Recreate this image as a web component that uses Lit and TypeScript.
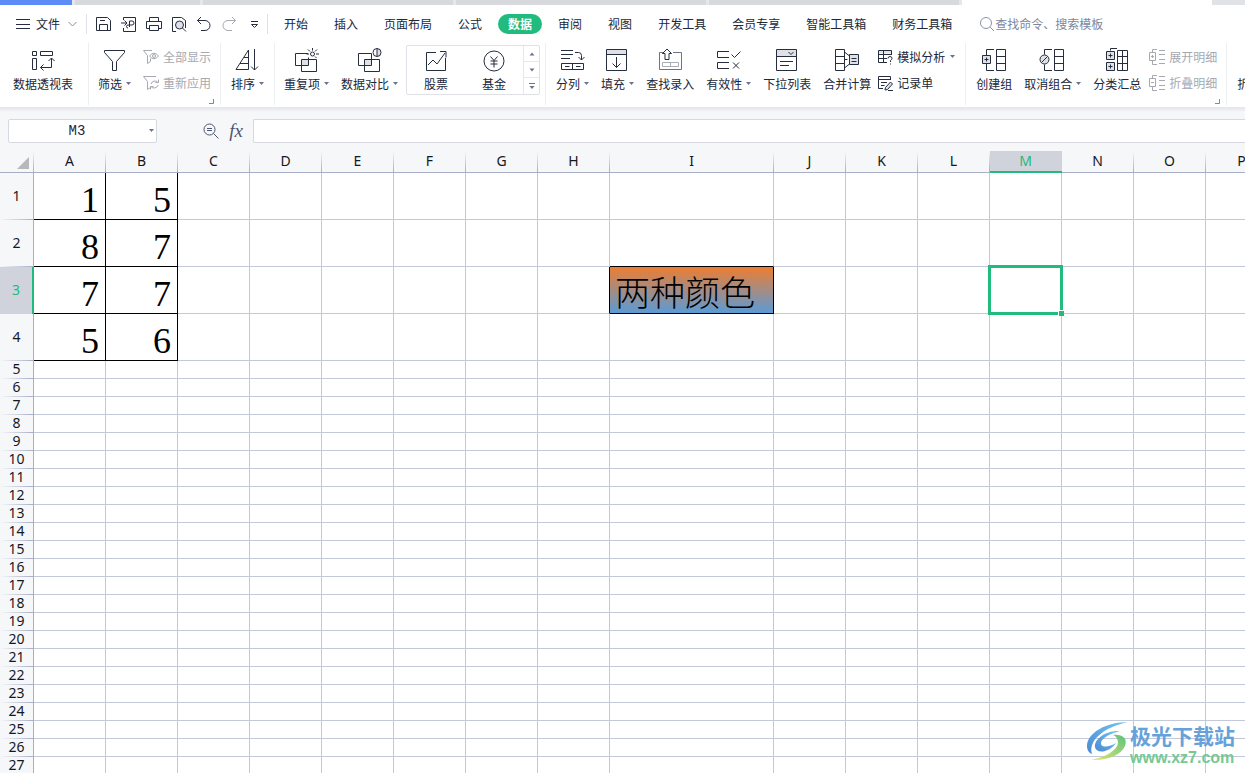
import { LitElement, html, svg, css, nothing, TemplateResult } from "lit";
import { customElement } from "lit/decorators.js";
import { classMap } from "lit/directives/class-map.js";

type Art = ReturnType<typeof svg>;

const big = (art: Art) => html`<svg class="big" viewBox="0 0 24 24" aria-hidden="true">${art}</svg>`;
const small = (art: Art) => html`<svg class="small" viewBox="0 0 16 16" aria-hidden="true">${art}</svg>`;

/* ---------- 24px ribbon icons ---------- */
const pivot = svg`<path d="M1.5 3.5h4v4h-4zM9.5 3.5h12v4h-12zM1.5 10.5h4v11h-4zM20.5 10v9.5H9.5M17.5 13l3-3 3 3M12.5 16.5l-3 3 3 3"/>`;
const filter = svg`<path d="M2.5 2.5h20v2l-8 9v9h-4v-9l-8-9z"/>`;
const sort = svg`<path d="M13.5 2v19.5H1L13.5 2M9 9.5h4.500M5 15.500h8.500M19.500 1v21M16 18.500l3.500 3.500 3.500-3.500"/>`;
const duplicate = svg`<path class="tint" d="M7.500 11.500h7v6h-7z"/><path d="M14 5.500H1.500v12h13V9.500M15 11.500h7.500v12h-15v-12h7"/><circle cx="18.500" cy="6" r="2"/><path d="M18.500 0v2.500M14 1.500l2 2M23 1.500l-2 2M12.500 6H15M22 6h3M21 8.500l1.500 1.500"/>`;
const compare = svg`<path class="tint" d="M7.500 11.500h7v6h-7z"/><path d="M14.500 5.500h-13v12h13v-12M14.500 11.500h8v12h-15v-12z"/><path class="tint" d="M20 .5a4 4 0 010 8z"/><circle cx="20" cy="4.500" r="4"/><path d="M20 .5v8"/>`;
const stock = svg`<path d="M12 4.500H2.500v18h19V10M4 17l5-5 4 4 8-11M16 3.500h6v6"/>`;
const fund = svg`<circle cx="12" cy="13" r="10"/><path d="M8.500 8.500l3.500 4 3.500-4M8.500 13h7M8.500 16h7M12 12.500v7"/>`;
const splitCols = svg`<path d="M1 2.500h12M1 6.500h12M1 10.500h9M15 4.500h3.500q3 0 3 3V12M18.500 9l3 3 3-3M1.500 15.500h22v6h-22zM12.500 15.500v6M5 18.500h4.500M16 18.500h4.500"/>`;
const fill = svg`<path class="tint" d="M1.500 1.500h20v5h-20z"/><path d="M1.500 1.500h20v21h-20zM1.500 6.500h20M11.500 9v10.500M7.500 15.500l4 4 4-4"/>`;
const lookup = svg`<path class="mid" d="M5 4.500H1.500v17h22v-17H15"/><path d="M9 1L4.500 5.500H7v6h4v-6h2.500z"/><path class="dim" d="M4.500 14.500h16v4h-16zM12.500 14.500v4"/>`;
const validity = svg`<path d="M13 3.500H1.500v6H13M13 14.500H1.500v6H13M15.500 6.500l3 3 6-6M17 14.500l6 6M23 14.500l-6 6"/>`;
const dropdown = svg`<path class="tint" d="M1.500 1.500h20v7h-20z"/><path d="M1.500 1.500h20v21h-20zM1.500 8.500h20M13.500 4l2.500 2.500L18.500 4M5 13.500h13M5 17.500h9"/>`;
const consolidate = svg`<path class="tint" d="M14.500 6.500h9v10h-9z"/><path d="M.5 1.500h9v21h-9zM.5 8.500h9M.5 15.500h9M9.500 4l5 4M9.500 20l5-4M14.500 6.500h9v10h-9zM9.500 11.500h3M16.500 10.500h5M16.500 13.500h5"/>`;
const group = svg`<path d="M14.500 1.500h9v21h-9zM14.500 8.500h9M14.500 15.500h9M12 1.500H4.500v6M12 22.500H4.500v-7"/><path class="tint edge" d="M.5 7.500h8v8h-8z"/><path d="M2.500 11.500h4M4.500 9.500v4"/>`;
const ungroup = svg`<path d="M14.500 1.500h9v21h-9zM14.500 8.500h9M14.500 15.500h9M12 1.500H4.500v5M12 22.500H4.500v-6"/><circle class="tint edge" cx="4.500" cy="11.500" r="4.500"/><path d="M1.500 14.500l6-6"/>`;
const subtotal = svg`<path d="M12.500 2.500h10v20h-10zM17.500 2.500v20M12.500 8.500h10M12.500 15.500h10M12 .5H5.500v2"/><path class="tint edge" d="M1.500 3.500h8v8h-8zM1.500 14.500h8v8h-8z"/><path d="M3.500 7.500h4M5.500 5.500v4M3.500 18.500h4M5.500 16.500v4"/>`;
const fold = svg`<path d="M12.500 1.500h9v21h-9zM12.500 8.500h9M12.500 15.500h9"/>`;

/* ---------- 16px icons ---------- */
const showAll = svg`<path d="M9 1.500H.5l4 5v8l3-2v-3"/><path d="M6.500 7q4.500-5.500 9 0q-4.500 5.500-9 0z"/><circle cx="11" cy="7" r="1.500"/>`;
const reapply = svg`<path d="M13 1.500H.5l4 5v8l3-2"/><path d="M8 9a4 4 0 017-1.500M15 10a4 4 0 01-7 1.500M15.500 4.500v3h-3M7.500 14.500v-3h3"/>`;
const whatIf = svg`<path class="tint" d="M1.500 1.500h13v3h-13z"/><path d="M14.500 6V1.500h-13v12H10M1.500 5.500h13M1.500 9.500H10M6.500 1.500v12M11 9.500q0-2 2-2t2 2q0 1-1.500 2v1.500M13.500 14.500v1"/>`;
const recordForm = svg`<path d="M13.500 5V1.500h-12v12H6M1.500 4.500h12M4 7.500h6M4 10.500h3.500"/><path class="tint edge" d="M8.500 12.500l5-5.500 2 2-5 5.500-2.500.5z"/><path d="M11 15.500h5"/>`;
const expand = svg`<path d="M8 .5H3.500v3M3.500 11.500v4H8M10 1.500h6M10 5.500h6M10 10.500h6M10 14.500h6M.5 3.500h6v8h-6zM2 7.500h3M3.500 6v3"/>`;
const collapse = svg`<path d="M8 .5H3.500v3M3.500 11.500v4H8M10 1.500h6M10 5.500h6M10 10.500h6M10 14.500h6M.5 3.500h6v8h-6zM2 7.500h3"/>`;
const save = svg`<path d="M.5 1.500h11l3 3v10H.5zM3.500 14.500v-6h8v6M4 4.500h5"/>`;
const exportTo = svg`<path d="M2.500 4V1.500h12v14h-12V12M0 7h6M3.500 4.500L6 7 3.500 9.500M8.500 11V5H11a2 2 0 010 4H7a1.500 1.500 0 100 3"/>`;
const print = svg`<path d="M3.500 5V1.500h9V5M3.500 12.500h-3v-7h15v7h-3M3.500 9.500h9v5h-9z"/>`;
const preview = svg`<path d="M5 15.500H1.500v-14h9l4 3V12"/><circle class="tint edge" cx="8.500" cy="9" r="4"/><path d="M11.500 12l3.500 3.500"/>`;
const undo = svg`<path d="M5 1L1.500 4.500 5 8M1.500 4.500H9a5 5 0 010 10H5"/>`;
const redo = svg`<path d="M11 1l3.500 3.500L11 8M14.500 4.500H7a5 5 0 000 10h4"/>`;
const more = svg`<path d="M5 5.500h7M5.500 8.500l3 3 3-3z"/>`;
const menuBars = svg`<path d="M0 3.500h14M0 8.500h14M0 12.500h14"/>`;
const magnifier = svg`<circle cx="7" cy="7" r="5.500"/><path d="M11 11l4 4"/>`;
const findValue = svg`<circle cx="6.500" cy="6.500" r="5.500"/><path d="M10.500 10.500l5 5M4 5.500h5M4 7.500h5"/>`;

const caret = html`<svg class="caret" viewBox="0 0 8 6" aria-hidden="true"><path d="M4 1h5L6.500 4z"/></svg>`;

interface Command { label: string; icon: Art; menu?: boolean; off?: boolean }
const ribbon: Record<string, Command[]> = {
  main: [
    { label: "分列", icon: splitCols, menu: true },
    { label: "填充", icon: fill, menu: true },
    { label: "查找录入", icon: lookup },
    { label: "有效性", icon: validity, menu: true },
    { label: "下拉列表", icon: dropdown },
    { label: "合并计算", icon: consolidate },
  ],
  outline: [
    { label: "创建组", icon: group },
    { label: "取消组合", icon: ungroup, menu: true },
    { label: "分类汇总", icon: subtotal },
  ],
};

const tabs = ["开始", "插入", "页面布局", "公式", "数据", "审阅", "视图", "开发工具", "会员专享", "智能工具箱", "财务工具箱"];
const quick: [string, Art, boolean?][] = [
  ["保存", save], ["输出", exportTo], ["打印", print], ["打印预览", preview], ["撤销", undo], ["恢复", redo, true], ["更多", more],
];

const columns = "ABCDEFGHIJKLMNOPQRST".split("");
const rowCount = 40;
const values: Record<string, string> = {
  A1: "1", B1: "5", A2: "8", B2: "7", A3: "7", B3: "7", A4: "5", B4: "6", I3: "两种颜色",
};
const boxed = new Set(["A1", "B1", "A2", "B2", "A3", "B3", "A4", "B4", "I3"]);

@customElement("sheet-grid")
class SheetGrid extends LitElement {
  static styles = css`
    :host { display: block; overflow: hidden; background: #fff; }
    table { table-layout: fixed; border-collapse: separate; border-spacing: 0; width: max-content; }
    .gutter { width: 34px; }
    .col { width: 72px; }
    .col.wide { width: 164px; }
    th, td { box-sizing: border-box; padding: 0; border: 0 solid #c4c9da; border-width: 0 1px 1px 0; overflow: hidden; white-space: nowrap; }
    th { font: 14px/16px "Noto Sans", "Open Sans", sans-serif; color: #16181f; background: #f5f7f9; text-align: center; vertical-align: middle; padding: 0 1px 2px 0; }
    thead th { height: 22px; border-right: 0;  border-bottom-color: #a8aec6;
      background: linear-gradient(#f5f7f9, #a8aec6) right / 1px 100% no-repeat #f5f7f9; }
    thead th.on { background: #d0d3db; color: #20bb7d; border-bottom: 2px solid #20bb7d; padding-bottom: 1px; }
    tbody th { border-right-color: #a8aec6; border-bottom: 0; padding-right: 0;
      background: linear-gradient(90deg, #f5f7f9, #a8aec6) bottom / 100% 1px no-repeat #f5f7f9; }
    tbody th.on { background: #d0d3db; color: #20bb7d; border-right: 2px solid #20bb7d; }
    .corner { text-align: right; }
    .corner svg { display: block; width: 12px; height: 12px; margin: 5px 4px 0 auto; fill: #b7b8bb; }
    .tall { height: 47px; }
    .short { height: 18px; }
    td { font: 36px/37px "Liberation Serif", "Noto Sans CJK SC", serif; color: #000; text-align: right; }
    .tall td { padding: 9px 6px 0 5px; }
    td.right { border-right-color: #000; }
    td.bottom { border-bottom-color: #000; }
    td.blend { background: linear-gradient(#ed7d31, #5b9bd5); text-align: left; font-size: 35px; line-height: 35px; font-weight: 300; }
    td.active { position: relative; overflow: visible; }
    .ring { position: absolute; inset: -2px; border: 3px solid #20bb7d; }
    .handle { position: absolute; right: -3px; bottom: -3px; width: 5px; height: 5px; background: #20bb7d; border: solid #fff; border-width: 1px 0 0 1px; }
  `;

  cell(c: number, r: number) {
    const key = columns[c] + r;
    const next = columns[c + 1] + r;
    const below = columns[c] + (r + 1);
    const active = key === "M3";
    return html`<td class=${classMap({
      right: boxed.has(key) || boxed.has(next),
      bottom: boxed.has(key) || boxed.has(below),
      blend: key === "I3",
      active,
    })}>${values[key] ?? nothing}${active ? html`<span class="ring"></span><span class="handle"></span>` : nothing}</td>`;
  }

  render() {
    return html`<table>
      <colgroup>
        <col class="gutter">
        ${columns.map((c) => html`<col class=${c === "I" ? "col wide" : "col"}>`)}
      </colgroup>
      <thead><tr>
        <th class="corner"><svg viewBox="0 0 12 12" aria-hidden="true"><path d="M12 0v12H0z"/></svg></th>
        ${columns.map((c) => html`<th scope="col" class=${c === "M" ? "on" : ""}>${c}</th>`)}
      </tr></thead>
      <tbody>
        ${Array.from({ length: rowCount }, (_, i) => i + 1).map((r) => html`<tr class=${r < 5 ? "tall" : "short"}>
          <th scope="row" class=${r === 3 ? "on" : ""}>${r}</th>
          ${columns.map((_, c) => this.cell(c, r))}
        </tr>`)}
      </tbody>
    </table>`;
  }
}

@customElement("app-root")
class AppRoot extends LitElement {
  static styles = css`
    :host { display: flex; flex-direction: column; position: relative; height: 100vh; overflow: hidden; background: #fff;
      color: #20273a; font: 12px/16px "Noto Sans CJK SC", sans-serif; }
    button { font: inherit; color: inherit; background: none; border: 0; padding: 0; margin: 0; white-space: nowrap; }
    input { font: inherit; color: inherit; box-sizing: border-box; outline: none; min-width: 0; }
    svg { display: block; fill: none; stroke: #262d3f; overflow: visible; flex: none; }
    .big { width: 24px; height: 24px; }
    .small { width: 16px; height: 16px; }
    .tint { fill: #dfe1e7; stroke: none; }
    .tint.edge { stroke: #262d3f; }
    .mid { stroke: #6f7481; }
    .dim { stroke: #a9adb6; }
    .caret { width: 8px; height: 6px; fill: #6a7390; stroke: none; }
    .off { color: #a6a9b0; }
    .off svg { stroke: #a6a9b0; }

    .windows { display: flex; flex: none; height: 5px; gap: 3px; background: #e6e7eb; }
    .windows span { flex: 0 0 250px; background: #d7d9dd; }
    .windows .current { flex-basis: 72px; background: #5e8cf7; }
    .windows .next { flex-basis: 125px; }
    .windows .blank { flex: 1 1 0; background: #fff; }
    .windows .tail { flex-basis: 33px; margin-left: -3px; background: #e1e2e7; }

    .bar { display: flex; flex: none; align-items: center; height: 38px; }
    .file { display: flex; align-items: center; gap: 6px; padding: 0 9px 0 16px; }
    .file .bars { width: 14px; height: 16px; }
    .file .down { width: 9px; height: 6px; margin-left: 2px; stroke: #8a8d94; }
    .rule { flex: none; width: 1px; height: 20px; background: #dfe1e6; }
    .quick { display: flex; gap: 9px; padding: 0 5px 0 9px; }
    .tabs { display: flex; gap: 6px; padding-left: 6px; }
    .tabs button { padding: 2px 10px; border-radius: 10px; }
    .tabs .on { background: #20bb7d; color: #fff; font-weight: 700; }
    .search { display: flex; align-items: center; flex: 1; padding-left: 17px; min-width: 0; }
    .search svg { stroke: #8a93ab; }
    .search input { flex: 1; border: 0; padding: 0; background: none; }
    .search input::placeholder { color: #7c869f; opacity: 1; }

    .ribbon { display: flex; flex: none; height: 64px; overflow: hidden; }
    .set { position: relative; display: flex; flex: none; gap: 12px; padding: 0 9px 0 10px; margin-bottom: 2px; border-right: 1px solid #eceef1; }
    .set.first { padding: 0 15px 0 13px; }
    .set.filter { padding-left: 9px; }
    .set.sort { padding-right: 10px; }
    .set.main { padding-right: 11px; }
    .set.last { border: 0; }
    .set.compact { padding: 0 5px 0 9px; }
    .cmd { display: flex; flex-direction: column; align-items: center; justify-content: flex-start; gap: 4px; padding-top: 5px; }
    .cmd.menu { margin-right: 1px; }
    .line { display: flex; align-items: center; }
    .stack { display: flex; flex-direction: column; gap: 6px; padding-top: 4px; }
    .main .stack { margin-left: -6px; }
    .outline .stack { margin-left: -4px; }
    .stack button { display: flex; align-items: center; height: 20px; gap: 4px; }
    .stack .caret { margin-left: -3px; }
    .launch { position: absolute; right: 6px; bottom: 1px; }
    .launch svg { width: 5px; height: 5px; stroke: #7f88a3; }
    .gallery { display: flex; height: 48px; margin: 2px 0 0 -4px; border: 1px solid #dfe1e6; border-radius: 2px; }
    .gallery .cmd { width: 58px; padding-top: 2px; }
    .spin { display: grid; grid-template-rows: 1fr 1fr 1fr; width: 15px; border-left: 1px solid #e6e8ec; }
    .spin button { display: flex; align-items: center; justify-content: center; border-bottom: 1px solid #e6e8ec; }
    .spin button:last-child { border-bottom: 0; }
    .spin svg { width: 6px; height: 6px; fill: #6a7390; stroke: none; }

    .formula { display: flex; flex: none; align-items: center; height: 44px; padding: 2px 0 0 8px; box-sizing: border-box;
      background: linear-gradient(#e4e6e9, #f5f7f9 4px); border-top: 1px solid #e6e7e9; }
    .name { display: flex; align-items: center; width: 149px; height: 24px; box-sizing: border-box; border: 1px solid #d6d9df; border-radius: 2px; background: #fff; }
    .name input { width: 136px; border: 0; padding: 0; background: none; text-align: center; font: 14px/16px "Liberation Mono", monospace; }
    .tools { display: flex; align-items: center; gap: 9px; padding: 0 9px 0 46px; }
    .tools svg { stroke: #4d5670; }
    .fx { width: 16px; font: italic 19px/20px "Liberation Serif", serif; color: #4d5670; }
    .entry { flex: 1; height: 24px; border: 1px solid #d6d9df; border-right: 0; border-radius: 2px 0 0 2px; background: #fff; padding: 0 6px; }

    sheet-grid { flex: 1; min-height: 0; }

    .brand { position: absolute; right: 10px; bottom: 6px; display: flex; align-items: flex-start; gap: 2px; text-decoration: none; opacity: .92; }
    .brand .mark { width: 42px; height: 42px; stroke: none; }
    .site { display: block; font: 700 21px/28px "Noto Sans CJK SC", sans-serif; color: #5a9bd6; }
    .url { display: block; font: 700 16px/18px "Liberation Sans", sans-serif; color: #6cc58b; }
  `;

  cmd(c: Command): TemplateResult {
    return html`<button class=${classMap({ cmd: true, menu: !!c.menu })}>${big(c.icon)}<span class="line">${c.label}${c.menu ? caret : nothing}</span></button>`;
  }

  row(label: string, art: Art, off = false, menu = false) {
    return html`<button class=${off ? "off" : ""}>${small(art)}${label}${menu ? caret : nothing}</button>`;
  }

  launcher() {
    return html`<button class="launch" aria-label="更多设置"><svg viewBox="0 0 5 5"><path d="M4.500 0v4.500H0"/></svg></button>`;
  }

  render() {
    return html`
      <div class="windows"><span class="current"></span><span class="next"></span><span></span><span></span><span></span><span class="blank"></span><span class="tail"></span></div>

      <nav class="bar">
        <button class="file"><svg class="bars" viewBox="0 0 14 16">${menuBars}</svg>文件<svg class="down" viewBox="0 0 9 6"><path d="M.5 1l4 4 4-4"/></svg></button>
        <span class="rule"></span>
        <div class="quick">${quick.map(([name, art, off]) => html`<button class=${off ? "off" : ""} aria-label=${name}>${small(art)}</button>`)}</div>
        <span class="rule"></span>
        <div class="tabs">${tabs.map((t) => html`<button class=${t === "数据" ? "on" : ""}>${t}</button>`)}</div>
        <label class="search">${small(magnifier)}<input type="text" aria-label="查找命令、搜索模板" placeholder="查找命令、搜索模板"></label>
      </nav>

      <div class="ribbon">
        <div class="set first">${this.cmd({ label: "数据透视表", icon: pivot })}</div>
        <div class="set filter">
          ${this.cmd({ label: "筛选", icon: filter, menu: true })}
          <div class="stack">${this.row("全部显示", showAll, true)}${this.row("重新应用", reapply, true)}</div>
          ${this.launcher()}
        </div>
        <div class="set sort">${this.cmd({ label: "排序", icon: sort, menu: true })}</div>
        <div class="set compact">
          ${this.cmd({ label: "重复项", icon: duplicate, menu: true })}
          ${this.cmd({ label: "数据对比", icon: compare, menu: true })}
          <div class="gallery">
            ${this.cmd({ label: "股票", icon: stock })}
            ${this.cmd({ label: "基金", icon: fund })}
            <div class="spin">
              <button aria-label="上一行"><svg viewBox="0 0 6 6"><path d="M.5 4.500h5L3 1.500z"/></svg></button>
              <button aria-label="下一行"><svg viewBox="0 0 6 6"><path d="M.5 1.500h5L3 4.500z"/></svg></button>
              <button aria-label="展开"><svg viewBox="0 0 6 6"><path d="M0 0h6v1H0zM.5 3h5L3 6z"/></svg></button>
            </div>
          </div>
        </div>
        <div class="set main">
          ${ribbon.main.map((c) => this.cmd(c))}
          <div class="stack">${this.row("模拟分析", whatIf, false, true)}${this.row("记录单", recordForm)}</div>
        </div>
        <div class="set outline">
          ${ribbon.outline.map((c) => this.cmd(c))}
          <div class="stack">${this.row("展开明细", expand, true)}${this.row("折叠明细", collapse, true)}</div>
          ${this.launcher()}
        </div>
        <div class="set last">${this.cmd({ label: "折叠窗格", icon: fold })}</div>
      </div>

      <div class="formula">
        <div class="name"><input type="text" aria-label="名称框" .value=${"M3"}>${caret}</div>
        <div class="tools"><button aria-label="查找">${small(findValue)}</button><button class="fx">fx</button></div>
        <input class="entry" type="text" aria-label="编辑栏">
      </div>

      <sheet-grid></sheet-grid>

      <a class="brand" href="#">
        <svg class="mark" viewBox="0 0 42 42" aria-hidden="true">
          <defs>
            <linearGradient id="blue" x1="0" y1="1" x2="1" y2="0"><stop offset="0" stop-color="#3f7fd0"/><stop offset="1" stop-color="#63c4ee"/></linearGradient>
            <linearGradient id="lime" x1="0" y1="1" x2="1" y2="0"><stop offset="0" stop-color="#e6e36a"/><stop offset="1" stop-color="#4fbf6f"/></linearGradient>
          </defs>
          <path fill="url(#blue)" d="M42 1C20 1 1 12 1 25c0 4 2 7 5 8C2 22 14 7 42 1z"/>
          <path fill="url(#blue)" d="M34 10C20 9 8 18 9 26c1 7 14 6 21-4-6 4-14 5-15 1-1-5 8-10 19-13z"/>
          <path fill="url(#lime)" d="M27 14c9-1 15 3 12 11-4 9-18 15-34 14 14-3 26-9 27-17 0-4-2-7-5-8z"/>
        </svg>
        <span><span class="site">极光下载站</span><span class="url">www.xz7.com</span></span>
      </a>
    `;
  }
}
